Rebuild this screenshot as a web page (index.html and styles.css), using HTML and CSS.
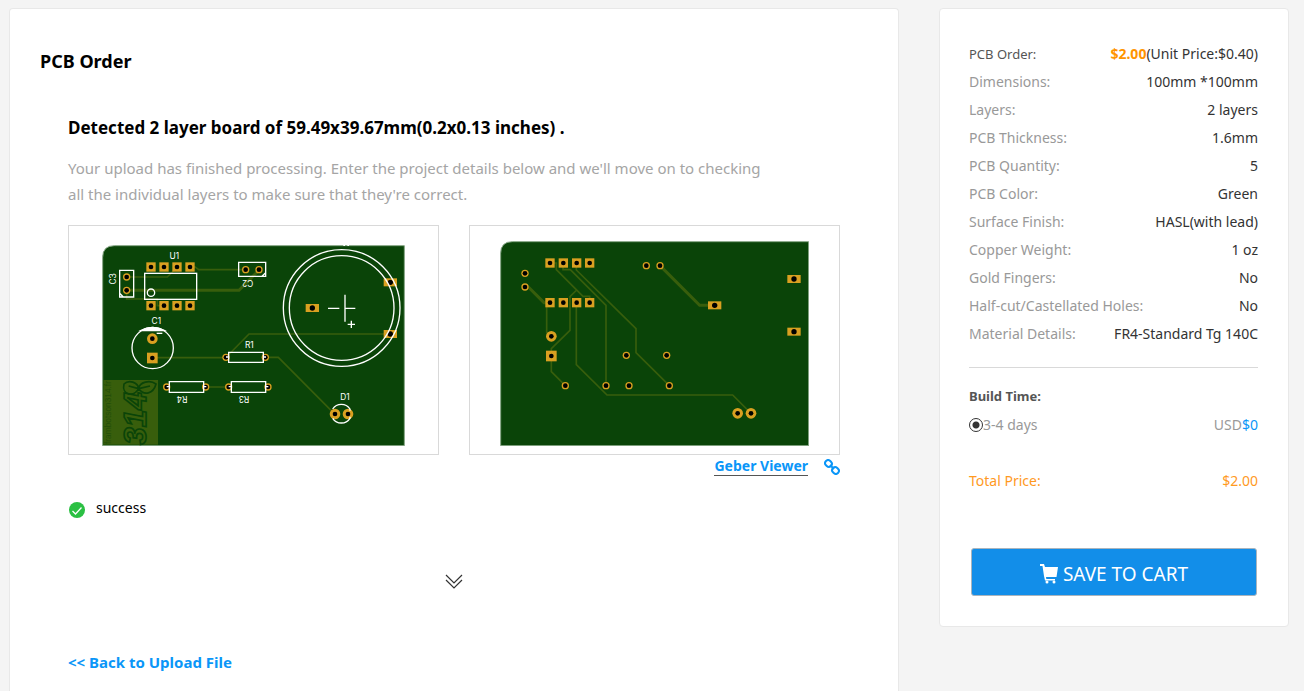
FILE: index.html
```html
<!DOCTYPE html>
<html lang="en">
<head>
    <meta charset="UTF-8">
    <meta name="viewport" content="width=device-width, initial-scale=1.0">
    <title>PCB Order</title>
    <link rel="stylesheet" href="styles.css">
</head>
<body>

<div class="page">
    <main class="panel order">
        <h1>PCB Order</h1>
        <div class="order-body">
            <h2>Detected 2 layer board of 59.49x39.67mm(0.2x0.13 inches) .</h2>
            <p class="intro">Your upload has finished processing. Enter the project details below and we'll move on to checking all the individual layers to make sure that they're correct.</p>

            <div class="boards">
                <div class="board">
                    <!-- top side -->
                    <svg width="303" height="201" viewBox="126 75 909 603" role="img" aria-label="Board top">
                        <defs>
                            <g id="sq"><rect x="-14" y="-14" width="28" height="28" fill="#d9a021"/><circle r="7" fill="#000"/></g>
                            <g id="sqBig"><rect x="-16" y="-16" width="32" height="32" fill="#d9a021"/><circle r="7" fill="#000"/></g>
                            <g id="slot"><rect x="-20" y="-12" width="40" height="24" fill="#d9a021"/><circle r="8" fill="#000"/></g>
                            <g id="pad"><circle r="16" fill="#d9a021"/><circle r="7" fill="#000"/></g>
                            <g id="hole"><circle r="11" fill="#d9a021"/><circle r="7" fill="#000"/></g>
                        </defs>
                        <path d="M128 677V112Q128 77 163 77H1033V677Z" fill="#0a4408" stroke="#86a685" stroke-width="3"/>
                        <rect x="130" y="480" width="164" height="194" fill="#385e0c"/>
                        <g class="trace">
                            <path d="M390 141H406L416 149H557M200 171H322L345 148M200 211V237H292V257H312M277 413H498M505 405L567 342H990M616 412H655L822 580M437 501H505"/>
                            <path d="M200 211H537L597 150" stroke-width="9"/>
                        </g>
                        <g class="stamp">
                            <text transform="translate(258 674) rotate(-90)" font-size="94" font-weight="bold" font-style="italic">314</text>
                            <path d="M236 506C222 532 184 526 192 492C206 478 234 486 236 506C238 486 270 478 288 492C280 522 252 528 236 506M206 498L236 506M270 498L236 506"/>
                            <text class="stamp-url" transform="translate(153 672) rotate(-90)" font-size="25">frambotson314.fr</text>
                        </g>
                        <g>
                            <use href="#sq" x="273" y="141"/><use href="#sq" x="312" y="141"/><use href="#sq" x="351" y="141"/><use href="#sq" x="390" y="141"/>
                            <use href="#sq" x="273" y="257"/><use href="#sq" x="312" y="257"/><use href="#sq" x="351" y="257"/><use href="#sq" x="390" y="257"/>
                            <use href="#hole" x="200" y="171"/><use href="#hole" x="200" y="211"/>
                            <use href="#hole" x="557" y="149"/><use href="#hole" x="597" y="149"/>
                            <use href="#pad" x="277" y="356"/><use href="#sqBig" x="277" y="414"/>
                            <use href="#hole" x="498" y="412"/><use href="#hole" x="616" y="412"/>
                            <use href="#hole" x="320" y="501"/><use href="#hole" x="437" y="501"/>
                            <use href="#hole" x="506" y="501"/><use href="#hole" x="624" y="501"/>
                            <use href="#slot" x="757" y="264"/><use href="#slot" x="991" y="187"/><use href="#slot" x="991" y="342"/>
                            <use href="#pad" x="825" y="582"/><use href="#pad" x="864" y="582"/>
                        </g>
                        <g class="silk">
                            <rect x="254" y="160" width="156" height="78"/>
                            <circle cx="273" cy="218" r="11"/>
                            <path d="M179 151H221V231H179ZM179 220L190 231M536 127H617V169H536ZM606 169L617 158"/>
                            <circle cx="278" cy="384" r="62"/>
                            <path d="M242 332Q278 312 314 332Z" fill="#fff"/>
                            <path d="M290 340H307"/>
                            <path d="M506 397H610V427H506ZM328 485H431V517H328ZM514 485H617V517H514ZM498 411H506M610 411H618M320 500H328M431 500H439M506 500H514M617 500H625"/>
                            <circle cx="845" cy="264" r="175"/><circle cx="845" cy="264" r="157"/>
                            <path d="M804 265H838M855 224V305M855 265H886M863 313H885M874 302V324M850 76H855M862 76H867"/>
                            <path d="M818 567A31 31 0 0 1 870 567V572M818 595A31 31 0 0 0 870 595V590"/>
                        </g>
                        <g class="label">
                            <text x="343" y="116">U1</text>
                            <text x="289" y="311">C1</text>
                            <text x="568" y="385">R1</text>
                            <text x="855" y="540">D1</text>
                            <text transform="translate(168 177) rotate(-90)">C3</text>
                            <text transform="translate(563 180) rotate(180)">C2</text>
                            <text transform="translate(366 529) rotate(180)">R4</text>
                            <text transform="translate(552 529) rotate(180)">R3</text>
                        </g>
                    </svg>
                </div>
                <div class="board">
                    <!-- bottom side -->
                    <svg width="309" height="205" viewBox="105 63 927 615" role="img" aria-label="Board bottom">
                        <path d="M107 677V100Q107 65 142 65H1031V677Z" fill="#0a4408" stroke="#86a685" stroke-width="3"/>
                        <g class="trace">
                            <path d="M255 129H274V149L354 229H374V248M335 210L315 230V331L259 386V455L301 497M294 129V149H316L423 256V497M334 129V150L513 326V398L613 497M334 248V434L426 525H803L858 580M245 248V338L258 349"/>
                            <path d="M180 201H190L237 248H255M585 137L704 256H748" stroke-width="9"/>
                        </g>
                        <g>
                            <use href="#sq" x="255" y="129"/><use href="#sq" x="295" y="129"/><use href="#sq" x="335" y="129"/><use href="#sq" x="374" y="129"/>
                            <use href="#sq" x="255" y="248"/><use href="#sq" x="295" y="248"/><use href="#sq" x="335" y="248"/><use href="#sq" x="374" y="248"/>
                            <use href="#hole" x="180" y="160"/><use href="#hole" x="180" y="201"/>
                            <use href="#hole" x="544" y="137"/><use href="#hole" x="585" y="137"/>
                            <use href="#pad" x="259" y="349"/><use href="#sqBig" x="259" y="408"/>
                            <use href="#hole" x="301" y="497"/><use href="#hole" x="423" y="497"/>
                            <use href="#hole" x="492" y="497"/><use href="#hole" x="613" y="497"/>
                            <use href="#hole" x="484" y="406"/><use href="#hole" x="605" y="406"/>
                            <use href="#slot" x="749" y="256"/><use href="#slot" x="987" y="177"/><use href="#slot" x="987" y="335"/>
                            <use href="#pad" x="818" y="580"/><use href="#pad" x="858" y="580"/>
                        </g>
                    </svg>
                </div>
            </div>

            <div class="viewer">
                <a class="viewer-link" href="#">Geber Viewer</a>
                <a class="copy-link" href="#" aria-label="Copy link">
                    <svg width="16" height="16" viewBox="0 0 16 16" fill="none" stroke="#0a96f8" stroke-width="2">
                        <rect x="1" y="1.500" width="7" height="6" rx="3" transform="rotate(45 4.500 4.500)"/>
                        <rect x="8" y="8.500" width="7" height="6" rx="3" transform="rotate(45 11.500 11.500)"/>
                        <path d="M6 6L10 10"/>
                    </svg>
                </a>
            </div>

            <div class="status">
                <svg width="16" height="16" viewBox="0 0 16 16">
                    <circle cx="8" cy="8" r="8" fill="#2bc043"/>
                    <path d="M3.500 9L6.500 12L12.500 5.500" fill="none" stroke="#fff" stroke-width="1.300"/>
                </svg>
                <span>success</span>
            </div>

            <button class="expand" type="button" aria-label="Show more">
                <svg width="18" height="16" viewBox="0 0 18 16" fill="none" stroke="#333" stroke-width="1.200">
                    <path d="M1 1L9 9L17 1M1 6L9 14L17 6"/>
                </svg>
            </button>

            <a class="back" href="#">&lt;&lt; Back to Upload File</a>
        </div>
    </main>

    <aside class="panel summary">
        <dl class="specs">
            <div class="row row-price"><dt>PCB Order:</dt><dd><strong>$2.00</strong>(Unit Price:$0.40)</dd></div>
            <div class="row"><dt>Dimensions:</dt><dd>100mm *100mm</dd></div>
            <div class="row"><dt>Layers:</dt><dd>2 layers</dd></div>
            <div class="row"><dt>PCB Thickness:</dt><dd>1.6mm</dd></div>
            <div class="row"><dt>PCB Quantity:</dt><dd>5</dd></div>
            <div class="row"><dt>PCB Color:</dt><dd>Green</dd></div>
            <div class="row"><dt>Surface Finish:</dt><dd>HASL(with lead)</dd></div>
            <div class="row"><dt>Copper Weight:</dt><dd>1 oz</dd></div>
            <div class="row"><dt>Gold Fingers:</dt><dd>No</dd></div>
            <div class="row"><dt>Half-cut/Castellated Holes:</dt><dd>No</dd></div>
            <div class="row"><dt>Material Details:</dt><dd>FR4-Standard Tg 140C</dd></div>
        </dl>

        <h3>Build Time:</h3>
        <div class="row build">
            <label for="days"><input type="radio" id="days" name="build" checked>3-4 days</label>
            <span>USD<span class="blue">$0</span></span>
        </div>

        <div class="row total"><span>Total Price:</span><span>$2.00</span></div>

        <button class="save" type="button">
            <svg width="18" height="20" viewBox="0 0 18 20" fill="#fff">
                <path d="M0 0H4L5 3H18L16.500 13H6L6.300 15H15V16.500H5L4 12L2.500 2H0Z"/>
                <circle cx="7" cy="18" r="1.500"/><circle cx="14" cy="18" r="1.500"/>
            </svg>
            <span>SAVE TO CART</span>
        </button>
    </aside>
</div>

</body>
</html>
```

FILE: styles.css
```css
body {
    margin: 0;
    font-family: "Noto Sans", "Open Sans", sans-serif;
    font-size: 14px;
    color: #333;
    background-color: #f4f4f4;
}
h1, h2, h3, p, dl, dd {
    margin: 0;
}
svg {
    display: block;
}
button {
    font-family: inherit;
    cursor: pointer;
}
.page {
    display: flex;
    align-items: flex-start;
    gap: 40px;
    min-height: 100vh;
    padding: 8px 15px 0 9px;
    box-sizing: border-box;
}
.panel {
    box-sizing: border-box;
    background-color: #fff;
    border: 1px solid #e8e8e8;
    border-radius: 4px;
}

/* order panel */
.order {
    flex: 1;
    align-self: stretch;
    padding: 38px 30px 0;
    border-bottom: none;
    border-radius: 4px 4px 0 0;
}
h1 {
    font-size: 18px;
    line-height: 28px;
    color: #000;
}
.order-body {
    padding: 40px 28px 0;
}
h2 {
    font-size: 17px;
    line-height: 26px;
    color: #000;
}
.intro {
    max-width: 705px;
    margin-top: 14px;
    font-size: 15px;
    line-height: 26px;
    color: #a5a5a5;
}
.boards {
    display: grid;
    grid-template-columns: 1fr 1fr;
    gap: 30px;
    margin-top: 18px;
}
.board {
    display: flex;
    justify-content: center;
    align-items: flex-end;
    height: 220px;
    padding-bottom: 8px;
    border: 1px solid #d9d9d9;
}
.trace {
    fill: none;
    stroke: #385e0c;
    stroke-width: 5;
}
.silk {
    fill: none;
    stroke: #fff;
    stroke-width: 4;
}
.label {
    font-family: Inter, sans-serif;
    font-size: 25px;
    fill: #fff;
    text-anchor: middle;
}
.stamp {
    font-family: "Liberation Sans", sans-serif;
    fill: none;
    stroke: #0a4408;
    stroke-width: 5;
}
.stamp-url {
    fill: #234f0a;
    stroke: none;
}
.viewer {
    display: flex;
    justify-content: flex-end;
    align-items: center;
    gap: 16px;
    margin-top: 2px;
}
.viewer-link {
    font-weight: bold;
    line-height: 18px;
    color: #0a96f8;
    text-decoration: none;
    border-bottom: 1px solid #555;
}
.status {
    display: flex;
    align-items: flex-end;
    gap: 11px;
    margin-top: 22px;
    padding-left: 1px;
    line-height: 20px;
    color: #000;
}
.expand {
    display: block;
    margin: 56px auto 0;
    padding: 0;
    border: none;
    background: none;
}
.back {
    display: inline-block;
    margin-top: 62px;
    font-size: 15px;
    font-weight: bold;
    line-height: 20px;
    color: #0a96f8;
    text-decoration: none;
}

/* summary panel */
.summary {
    width: 350px;
    padding: 31px 30px 30px 29px;
}
.specs {
    padding-bottom: 19px;
    border-bottom: 1px solid #d9d9d9;
}
.row {
    display: flex;
    justify-content: space-between;
    line-height: 28px;
    color: #999;
}
.row dd {
    color: #333;
}
.row-price dt {
    font-size: 13px;
    color: #555;
}
.row-price strong {
    color: #ff9500;
}
h3 {
    margin-top: 18px;
    font-size: 13px;
    line-height: 20px;
    color: #555;
}
.build {
    margin-top: 5px;
}
.build label {
    display: flex;
    align-items: center;
}
.build input {
    appearance: none;
    box-sizing: border-box;
    width: 14px;
    height: 14px;
    margin: 0;
    border: 1px solid #333;
    border-radius: 50%;
    background: radial-gradient(circle, #333 0 3px, #fff 4px);
}
.blue {
    color: #0a96f8;
}
.total {
    margin-top: 28px;
    color: #ff9a1f;
}
.save {
    display: flex;
    justify-content: center;
    align-items: center;
    gap: 5px;
    width: calc(100% - 3px);
    height: 48px;
    margin: 53px 1px 0 2px;
    padding: 4px 0 0;
    border: 1px solid #a9b4bd;
    border-radius: 3px;
    font-size: 19px;
    color: #fff;
    background-color: #128ee9;
}
```
